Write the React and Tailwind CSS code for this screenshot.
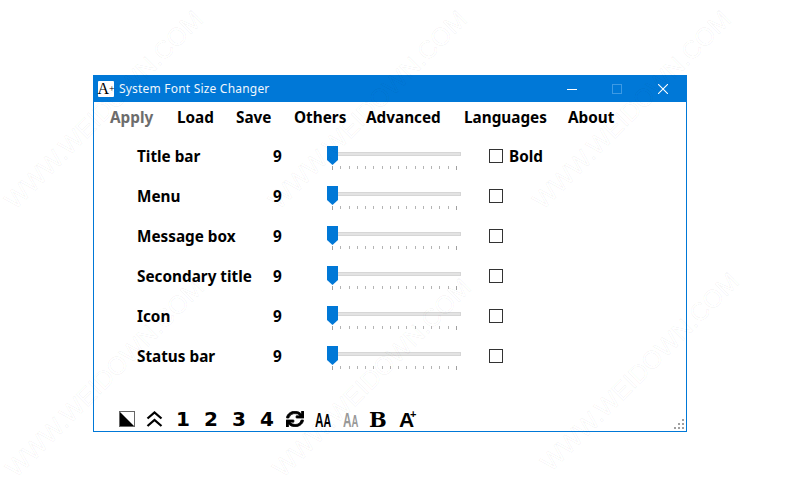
import { FaSync } from 'react-icons/fa';

const FONT = "font-['Noto_Sans','Open_Sans',sans-serif]";

const rows = ['Title bar', 'Menu', 'Message box', 'Secondary title', 'Icon', 'Status bar'];
const menu = [
  ['Apply', 'text-[#6d6d6d] w-[67px]'],
  ['Load', 'w-[59px]'],
  ['Save', 'w-[58px]'],
  ['Others', 'w-[72px]'],
  ['Advanced', 'w-[98px]'],
  ['Languages', 'w-[104px]'],
  ['About', ''],
];
const ticks = Array.from({ length: 16 }, (_, i) => i);
const watermarks = [
  'left-[104px] top-[110px]',
  'left-[368px] top-[110px]',
  'left-[632px] top-[110px]',
  'left-[105px] top-[378px]',
  'left-[372px] top-[378px]',
  'left-[640px] top-[372px]',
];

const Slider = () => (
  <div className="w-[135px] h-[24px] mt-[4px] flex flex-col">
    <div className="relative h-[20px] flex items-center pl-[6px]">
      <div className="w-[128px] h-[4px] mt-[-4px] bg-[#e3e3e3] border border-[#d6d6d6]" />
      <svg className="absolute left-0 top-0" width="11" height="20" viewBox="0 0 11 20">
        <path d="M0 0H11V14L5.5 19L0 14Z" fill="#0078d7" />
      </svg>
    </div>
    <div className="flex justify-between w-[125px] ml-[5px] h-[4px] items-start">
      {ticks.map((t) => (
        <div key={t} className={t === 0 || t === 15 ? 'w-px h-[4px] bg-[#a0a0a0]' : 'w-px h-[3px] bg-[#b4b4b4]'} />
      ))}
    </div>
  </div>
);

const Row = ({ label, first }) => (
  <div className="h-[40px] flex items-center font-bold text-[15.3px] text-black">
    <div className="w-[136px] whitespace-nowrap">{label}</div>
    <div className="w-[54px]">9</div>
    <Slider />
    <div className="ml-[27px] w-[14px] h-[14px] border border-[#333] bg-white" />
    {first && <div className="ml-[6px]">Bold</div>}
  </div>
);

const Toolbar = () => (
  <div className="flex items-center h-[24px] pl-[25px] text-black font-bold">
    <svg width="16" height="16" viewBox="0 0 16 16" className="mr-[11px]">
      <rect x="0.5" y="0.5" width="15" height="15" fill="#fff" stroke="#666" />
      <path d="M1 1V15H15Z" fill="#000" />
    </svg>
    <svg width="17" height="16" viewBox="0 0 17 16" className="mr-[13px]">
      <path d="M1.5 7.5L8.5 1.5L15.5 7.5M1.5 15L8.5 9L15.5 15" fill="none" stroke="#000" strokeWidth="2.3" />
    </svg>
    {['1', '2', '3', '4'].map((n) => (
      <span key={n} className="w-[28px] text-[20px] leading-none font-['DejaVu_Sans',sans-serif]">{n}</span>
    ))}
    <FaSync preserveAspectRatio="none" stroke="currentColor" strokeWidth={24} className="w-[18px] h-[16px] ml-[-2px] mr-[11px]" />
    <span className="w-[28px] text-[21px] leading-none font-['Liberation_Sans',sans-serif] scale-x-[0.56] origin-left whitespace-nowrap">
      A<span className="text-[19px]">A</span>
    </span>
    <span className="w-[26px] text-[21px] leading-none text-[#999] font-['Liberation_Sans',sans-serif] scale-x-[0.56] origin-left whitespace-nowrap">
      A<span className="text-[17px]">A</span>
    </span>
    <span className="w-[30px] text-[21px] leading-none font-['DejaVu_Serif',serif]">B</span>
    <span className="relative w-[17px] text-[21px] leading-none font-['Liberation_Sans',sans-serif]">
      A
      <span className="absolute left-[11px] top-0 text-[11px] leading-none">+</span>
    </span>
  </div>
);

const App = () => (
  <div className={`relative w-[790px] h-[500px] overflow-hidden bg-white pl-[93px] pt-[75px] ${FONT}`}>
    {/* Main window */}
    <div className="relative w-[594px] h-[357px] flex flex-col border border-[#0078d7] bg-white">
      <div className="h-[26px] shrink-0 flex items-center bg-[#0078d7] text-white">
        <div className="ml-[4px] w-[16px] h-[16px] bg-white rounded-[1px] flex items-center justify-center text-black text-[16px] leading-none font-['Liberation_Serif',serif]">
          A<span className="text-[10px]">+</span>
        </div>
        <div className="ml-[5px] text-[12px] tracking-[0.2px] text-[#f0f6fc]">System Font Size Changer</div>
        <div className="ml-auto flex items-center">
          <svg width="10" height="10" viewBox="0 0 10 10" className="mr-[35px]">
            <path d="M0 5.5H10" stroke="#fff" />
          </svg>
          <div className="w-[10px] h-[10px] border border-[#3d9ae4] mr-[36px]" />
          <svg width="10" height="10" viewBox="0 0 10 10" className="mr-[18px]">
            <path d="M0 0L10 10M10 0L0 10" stroke="#fff" strokeWidth="1.1" />
          </svg>
        </div>
      </div>

      <div className="h-[31px] shrink-0 flex items-center pl-[16px] font-bold text-[15.3px] text-black">
        {menu.map(([name, cls]) => (
          <div key={name} className={cls}>{name}</div>
        ))}
      </div>

      <div className="pl-[43px] mt-[3px]">
        {rows.map((r, i) => (
          <Row key={r} label={r} first={i === 0} />
        ))}
      </div>

      <div className="mt-auto">
        <Toolbar />
      </div>

      {/* Resize grip */}
      <div className="absolute right-[2px] bottom-[2px] grid grid-cols-3 gap-[2px]">
        {[0, 0, 1, 0, 1, 1, 1, 1, 1].map((on, i) => (
          <div key={i} className={on ? 'w-[2px] h-[2px] bg-[#a0a0a0]' : 'w-[2px] h-[2px]'} />
        ))}
      </div>
    </div>

    {/* Watermark */}
    {watermarks.map((pos) => (
      <div
        key={pos}
        className={`absolute ${pos} -translate-x-1/2 -translate-y-1/2 -rotate-45 text-[25px] font-['Liberation_Sans',sans-serif] whitespace-nowrap text-transparent [-webkit-text-stroke:1px_rgba(0,0,0,0.04)] pointer-events-none`}
      >
        WWW.WEIDOWN.COM
      </div>
    ))}
  </div>
);

export default App;
